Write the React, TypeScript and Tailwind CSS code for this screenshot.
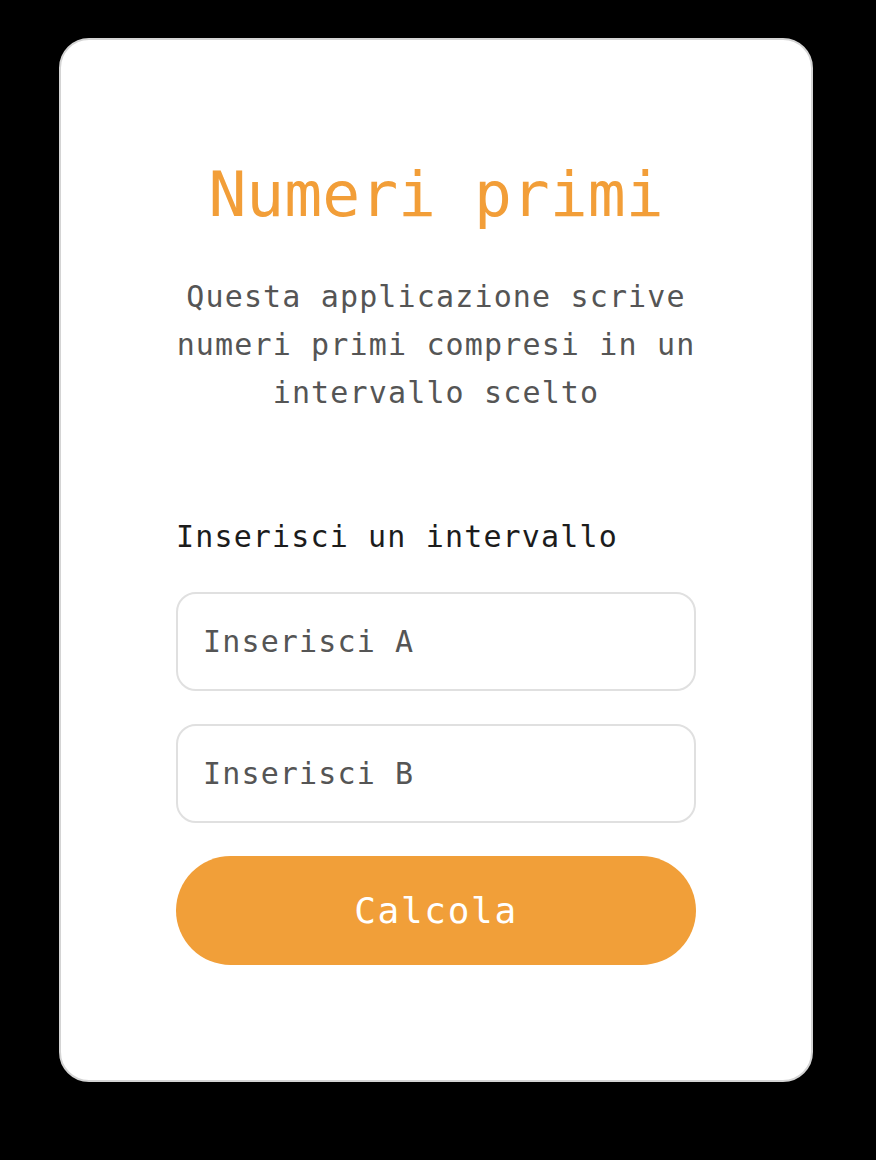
export default function App() {
  const mono = { fontFamily: '"DejaVu Sans Mono", "Liberation Mono", monospace' };
  return (
    <div className="min-h-[1160px] w-full bg-black pt-[38px] pl-[59px]" style={mono}>
      <div className="w-[754px] h-[1044px] bg-white border-2 border-[#d4d4d4] rounded-[30px] px-[115px] pt-[117px] flex flex-col items-stretch">
        <h1 className="text-[63px] leading-[76px] text-[#f29e38] text-center">Numeri primi</h1>
        <p className="mt-[40px] -mx-[2px] text-[30px] leading-[48px] tracking-[1.15px] text-[#555555] text-center">
          Questa applicazione scrive numeri primi compresi in un intervallo scelto
        </p>
        <label className="mt-[102px] text-[30px] leading-[36px] tracking-[1.15px] text-[#1c1c1c]">Inserisci un intervallo</label>
        <input
          className="mt-[37px] h-[99px] w-full rounded-[20px] border-2 border-[#e0e0e0] pl-[25px] text-[30px] tracking-[1.15px] text-[#222] placeholder:text-[#555555] outline-none"
          placeholder="Inserisci A"
          style={mono}
        />
        <input
          className="mt-[33px] h-[99px] w-full rounded-[20px] border-2 border-[#e0e0e0] pl-[25px] text-[30px] tracking-[1.15px] text-[#222] placeholder:text-[#555555] outline-none"
          placeholder="Inserisci B"
          style={mono}
        />
        <button
          className="mt-[33px] h-[109px] w-full rounded-full bg-[#f19f39] text-white text-[36px] tracking-[1.7px]"
          style={mono}
        >
          Calcola
        </button>
      </div>
    </div>
  );
}
